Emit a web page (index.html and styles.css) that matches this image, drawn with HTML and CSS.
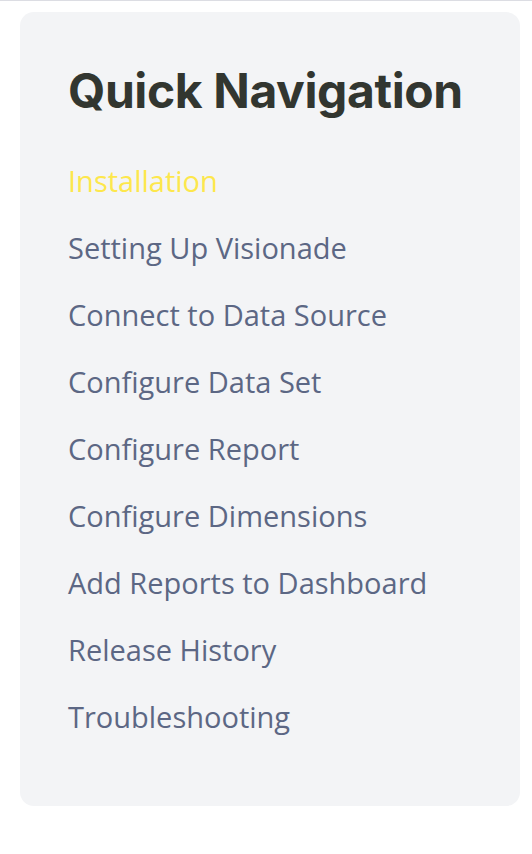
FILE: index.html
```html
<!DOCTYPE html>
<html>
<head>
<meta charset="utf-8">
<link rel="stylesheet" href="styles.css">
</head>
<body>
<div class="topline"></div>
<aside class="card">
  <h2 class="title">Quick Navigation</h2>
  <nav class="links">
    <a class="link active" href="#">Installation</a>
    <a class="link" href="#">Setting Up Visionade</a>
    <a class="link" href="#">Connect to Data Source</a>
    <a class="link" href="#">Configure Data Set</a>
    <a class="link" href="#">Configure Report</a>
    <a class="link" href="#">Configure Dimensions</a>
    <a class="link" href="#">Add Reports to Dashboard</a>
    <a class="link" href="#">Release History</a>
    <a class="link" href="#">Troubleshooting</a>
  </nav>
</aside>
</body>
</html>
```
FILE: styles.css
```css
html, body {
  margin: 0;
  padding: 0;
  background: #ffffff;
}
body {
  font-family: "Open Sans", "Liberation Sans", sans-serif;
}
.topline {
  height: 1px;
  background: #dcdde3;
}
.card {
  margin: 11px 12px 0 20px;
  width: 500px;
  box-sizing: border-box;
  height: 794px;
  background: #f3f4f6;
  border-radius: 14px;
  padding: 50px 48px 0 48px;
}
.title {
  margin: 0;
  font-family: Inter, "Liberation Sans", sans-serif;
  font-weight: 700;
  font-size: 48px;
  line-height: 58px;
  color: #323630;
  letter-spacing: -0.4px;
}
.links {
  display: flex;
  flex-direction: column;
  margin-top: 27px;
}
.link {
  font-size: 29px;
  line-height: 67px;
  color: #5c6784;
  text-decoration: none;
}
.link.active {
  color: #fde74c;
}
```
